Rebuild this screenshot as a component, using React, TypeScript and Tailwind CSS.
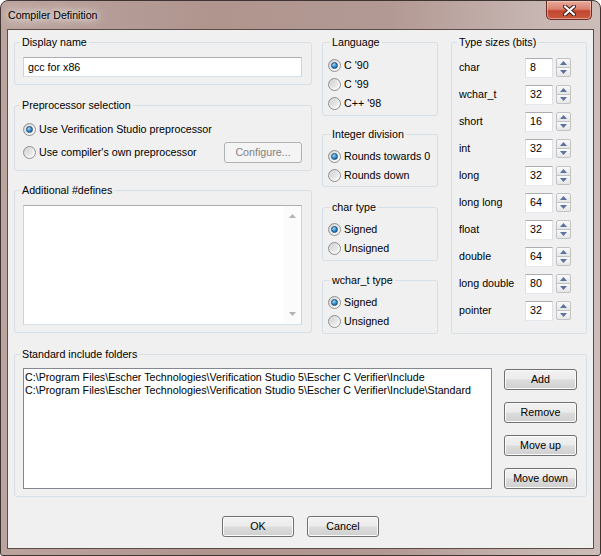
// Compiler Definition dialog (Windows 7 Aero look).
import type { ReactNode } from 'react'

function Radio({ checked }: { checked?: boolean }) {
  return (
    <span className="flex h-[13px] w-[13px] shrink-0 items-center justify-center rounded-full border border-[#8e8f8f] bg-[linear-gradient(135deg,#cfcfcf,#f2f2f2_65%,#ffffff)]">
      {checked ? (
        <span className="h-[7px] w-[7px] rounded-full border border-[#1d4f7c] bg-[radial-gradient(circle_at_35%_30%,#a6dcf8,#2f87c6_55%,#174f80)]" />
      ) : (
        <span className="h-[7px] w-[7px] rounded-full bg-[linear-gradient(135deg,#d4d4d4,#f1f1f1)]" />
      )}
    </span>
  )
}

function RadioRow({ label, checked }: { label: string; checked?: boolean }) {
  return (
    <div className="flex h-[19px] items-center gap-[3px]">
      <Radio checked={checked} />
      <span>{label}</span>
    </div>
  )
}

function Group({ title, className, legendClass, children }: {
  title: string; className?: string; legendClass?: string; children: ReactNode
}) {
  return (
    <fieldset className={`rounded-[3px] border border-[#d5dfe5] ${className ?? ''}`}>
      <legend className={`px-[2px] leading-[13px] ${legendClass ?? ''}`}>{title}</legend>
      {children}
    </fieldset>
  )
}

function WinButton({ label, className, disabled }: { label: string; className?: string; disabled?: boolean }) {
  return (
    <button
      type="button"
      className={
        disabled
          ? `flex h-[21px] items-center justify-center rounded-[3px] border border-[#adb2b5] bg-[#f4f4f4] text-[#838383] ${className ?? ''}`
          : `flex h-[21px] items-center justify-center rounded-[3px] border border-[#707070] bg-[linear-gradient(#f2f2f2_0%,#ebebeb_48%,#dddddd_52%,#cfcfcf_100%)] shadow-[inset_0_0_0_1px_#fbfbfb] ${className ?? ''}`
      }
    >
      {label}
    </button>
  )
}

function Arrow({ up, color }: { up?: boolean; color: string }) {
  return (
    <svg width="7" height="4" viewBox="0 0 7 4">
      <polygon points={up ? '3.5,0 7,4 0,4' : '0,0 7,0 3.5,4'} fill={color} />
    </svg>
  )
}

function SizeRow({ label, value }: { label: string; value: string }) {
  return (
    <div className="flex h-[27px] items-center">
      <span className="w-[66px]">{label}</span>
      <div className="flex h-[20px] w-[28px] items-center border border-[#abadb3] border-b-[#e3e9ef] border-x-[#dbdfe6] bg-white pl-[4px]">
        {value}
      </div>
      <div className="ml-[3px] flex h-[20px] w-[15px] flex-col">
        <div className="flex h-[10px] items-center justify-center rounded-t-[2px] border border-[#c2c2c2] bg-[linear-gradient(#fafafa,#e6e6e6)]">
          <Arrow up color="#5b72a0" />
        </div>
        <div className="-mt-px flex h-[10px] items-center justify-center rounded-b-[2px] border border-[#c2c2c2] bg-[linear-gradient(#fafafa,#e6e6e6)]">
          <Arrow color="#5b72a0" />
        </div>
      </div>
    </div>
  )
}

const sizes = [
  ['char', '8'], ['wchar_t', '32'], ['short', '16'], ['int', '32'], ['long', '32'],
  ['long long', '64'], ['float', '32'], ['double', '64'], ['long double', '80'], ['pointer', '32'],
]

export default function App() {
  return (
    <div className="h-[556px] w-[601px] text-[10.7px] leading-[13px] text-black [font-family:'Liberation_Sans',Arial,sans-serif]">
      <div className="flex h-full flex-col rounded-t-[8px] rounded-b-[3px] border border-[#3e3431] bg-[linear-gradient(90deg,#bca49e_0%,#b0958f_35%,#b39993_65%,#c7b6b2_90%,#ccbdb9_100%)] px-[6px] pb-[6px]">
        {/* title bar */}
        <div className="flex h-[28px] items-start justify-between">
          <span className="mt-[7px] pl-[1px] text-[10.6px] leading-[14px] [text-shadow:0_0_6px_#fff,0_0_12px_#fff,0_0_18px_#f4ecea]">
            Compiler Definition
          </span>
          <div className="mr-[2px] flex h-[19px] w-[46px] items-center justify-center rounded-b-[5px] border border-t-0 border-[#6a2c23] bg-[linear-gradient(#e9aa9c_0%,#d9826f_45%,#c3452f_55%,#c95a3f_100%)] shadow-[inset_0_0_0_1px_rgba(255,220,210,0.5)]">
            <svg width="13" height="11" viewBox="0 0 13 11">
              <path d="M2 1.5 L11 9.5 M11 1.5 L2 9.5" stroke="#3b1a15" strokeWidth="4.2" strokeLinecap="round" />
              <path d="M2 1.5 L11 9.5 M11 1.5 L2 9.5" stroke="#ffffff" strokeWidth="2.3" strokeLinecap="round" />
            </svg>
          </div>
        </div>

        {/* client area */}
        <div className="flex flex-1 flex-col border border-[#5c4c48] bg-[#f0f0f0] px-[6px] pt-[6px]">
          <div className="flex items-start">
            {/* column 1 */}
            <div className="flex w-[298px] flex-col">
              <Group title="Display name" className="pl-[8px] pr-[9px] pb-[7px]" legendClass="-ml-[3px]">
                <div className="mt-[8px] flex h-[20px] items-center border border-[#abadb3] border-x-[#c9d4df] border-b-[#d6e1ec] bg-white pl-[4px]">
                  gcc for x86
                </div>
              </Group>
              <Group title="Preprocessor selection" className="mt-[14px] pl-[8px] pr-[9px] pt-[8px] pb-[8px]" legendClass="-ml-[3px]">
                <RadioRow label="Use Verification Studio preprocessor" checked />
                <div className="mt-[3px] flex h-[20px] items-center justify-between">
                  <div className="flex items-center gap-[3px]">
                    <Radio />
                    <span>Use compiler's own preprocessor</span>
                  </div>
                  <WinButton label="Configure..." disabled className="h-[20px] w-[78px]" />
                </div>
              </Group>
              <Group title="Additional #defines" className="mt-[13px] pl-[8px] pr-[9px] pb-[7px]" legendClass="-ml-[3px]">
                <div className="mt-[8px] flex h-[120px] border border-[#abadb3] border-x-[#c9d4df] border-b-[#d6e1ec] bg-white">
                  <div className="flex-1" />
                  <div className="flex w-[17px] flex-col items-center justify-between bg-[#fbfbfb] py-[8px]">
                    <Arrow up color="#b3b3b3" />
                    <Arrow color="#b3b3b3" />
                  </div>
                </div>
              </Group>
            </div>

            {/* column 2 */}
            <div className="ml-[10px] flex w-[116px] flex-col">
              <Group title="Language" className="pl-[5px] pt-[7px] pb-[2px]" legendClass="ml-[2px]">
                <RadioRow label="C '90" checked />
                <RadioRow label="C '99" />
                <RadioRow label="C++ '98" />
              </Group>
              <Group title="Integer division" className="mt-[12px] pl-[5px] pt-[6px] pb-[1px]" legendClass="ml-[2px]">
                <RadioRow label="Rounds towards 0" checked />
                <RadioRow label="Rounds down" />
              </Group>
              <Group title="char type" className="mt-[14px] pl-[5px] pt-[6px] pb-[2px]" legendClass="ml-[2px]">
                <RadioRow label="Signed" checked />
                <RadioRow label="Unsigned" />
              </Group>
              <Group title="wchar_t type" className="mt-[13px] pl-[5px] pt-[6px] pb-[2px]" legendClass="ml-[2px]">
                <RadioRow label="Signed" checked />
                <RadioRow label="Unsigned" />
              </Group>
            </div>

            {/* column 3 */}
            <Group title="Type sizes (bits)" className="ml-[13px] w-[136px] pl-[7px] pt-[5px] pb-[9px]" legendClass="-ml-[2px]">
              {sizes.map(([label, value]) => (
                <SizeRow key={label} label={label} value={value} />
              ))}
            </Group>
          </div>

          <Group title="Standard include folders" className="mt-[14px] pl-[8px] pr-[9px] pt-[7px] pb-[7px]" legendClass="-ml-[3px]">
            <div className="flex items-start">
              <div className="h-[121px] flex-1 border border-[#828790] bg-white pl-[1px] pt-[2px]">
                <div>C:\Program Files\Escher Technologies\Verification Studio 5\Escher C Verifier\Include</div>
                <div>C:\Program Files\Escher Technologies\Verification Studio 5\Escher C Verifier\Include\Standard</div>
              </div>
              <div className="ml-[12px] mt-[1px] flex w-[73px] flex-col gap-[12px]">
                <WinButton label="Add" />
                <WinButton label="Remove" />
                <WinButton label="Move up" />
                <WinButton label="Move down" />
              </div>
            </div>
          </Group>

          <div className="mt-[19px] flex justify-center gap-[13px]">
            <WinButton label="OK" className="w-[72px]" />
            <WinButton label="Cancel" className="w-[72px]" />
          </div>
        </div>
      </div>
    </div>
  )
}
